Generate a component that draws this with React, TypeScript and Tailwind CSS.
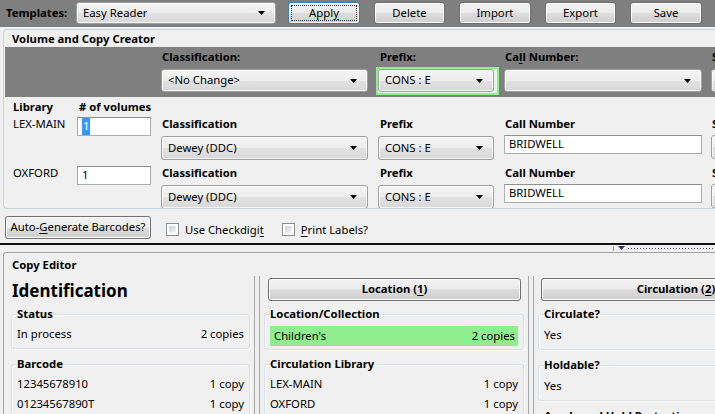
import React from "react";

const Arrow = () => (
  <svg width="7" height="4" viewBox="0 0 7 4" className="shrink-0">
    <path d="M0 0H7L3.5 4Z" fill="#000" />
  </svg>
);

function Combo({ text, className = "" }: { text: string; className?: string }) {
  return (
    <div
      className={`flex items-center justify-between rounded-[3px] border border-[#a0a0a0] bg-[linear-gradient(#f4f4f4,#ededed_50%,#e2e2e2_50%,#d8d8d8)] pl-[6px] pr-[10px] shadow-[inset_0_0_0_1px_rgba(255,255,255,0.75)] ${className}`}
    >
      <span className="truncate">{text}</span>
      <Arrow />
    </div>
  );
}

function Btn({ children, className = "" }: { children: React.ReactNode; className?: string }) {
  return (
    <div
      className={`flex items-center justify-center rounded-[3px] border border-[#707070] bg-[linear-gradient(#f2f2f2,#ebebeb_50%,#dddddd_50%,#cfcfcf)] shadow-[inset_0_0_0_1px_#fcfcfc] ${className}`}
    >
      {children}
    </div>
  );
}

function TextBox({ children, className = "" }: { children?: React.ReactNode; className?: string }) {
  return (
    <div
      className={`flex items-center border border-[#abadb3] border-t-[#8e8f8f] bg-white pl-[4px] ${className}`}
    >
      {children}
    </div>
  );
}

function Group({
  title,
  children,
  className = "",
}: {
  title: string;
  children?: React.ReactNode;
  className?: string;
}) {
  return (
    <fieldset
      className={`rounded-[3px] border border-[#d5dfe5] px-[5px] shadow-[inset_1px_1px_0_#fff,1px_1px_0_#fff] ${className}`}
    >
      <legend className="font-bold leading-[16px]">{title}</legend>
      {children}
    </fieldset>
  );
}

function Row({ left, right, className = "" }: { left: string; right?: string; className?: string }) {
  return (
    <div className={`flex h-[20px] items-center justify-between ${className}`}>
      <span>{left}</span>
      {right && <span>{right}</span>}
    </div>
  );
}

function CheckBox() {
  return (
    <div className="h-[13px] w-[13px] border border-[#8e8f8f] bg-white p-[2px]">
      <div className="h-full w-full bg-linear-to-br from-[#cbcfd5] to-[#f6f6f6]" />
    </div>
  );
}

function RightCols({ header }: { header: boolean }) {
  const suffix = header ? "Suffix:" : "Suffix";
  return (
    <div className="flex">
      <div className="flex w-[207px] shrink-0 flex-col">
        <div className="h-[17px] pl-[1px] font-bold leading-[17px]">
          {header ? "Classification:" : "Classification"}
        </div>
        <Combo
          text={header ? "<No Change>" : "Dewey (DDC)"}
          className={header ? "mt-[4px] h-[23px]" : "mt-[4px] h-[24px]"}
        />
      </div>
      <div className="ml-[10px] flex w-[116px] shrink-0 flex-col">
        <div className="h-[17px] pl-[2px] font-bold leading-[17px]">{header ? "Prefix:" : "Prefix"}</div>
        {header ? (
          <div className="-ml-[2px] mt-[2px] h-[28px] w-[123px] border-2 border-[#90ee90] bg-[#e6f5e6] pr-[3px]">
            <Combo text="CONS : E" className="h-[23px] w-[116px]" />
          </div>
        ) : (
          <Combo text="CONS : E" className="mt-[4px] h-[24px]" />
        )}
      </div>
      <div className="ml-[10px] flex w-[198px] shrink-0 flex-col">
        <div className="h-[17px] pl-[1px] font-bold leading-[17px]">
          {header ? (
            <>
              Ca<u className="underline-offset-2">l</u>l Number:
            </>
          ) : (
            "Call Number"
          )}
        </div>
        {header ? (
          <Combo text="" className="mt-[4px] h-[23px]" />
        ) : (
          <TextBox className="mt-[3px] h-[19px]">BRIDWELL</TextBox>
        )}
      </div>
      <div className="ml-[9px] flex w-[120px] shrink-0 flex-col">
        <div className="h-[17px] pl-[1px] font-bold leading-[17px]">{suffix}</div>
        <Combo text="" className={header ? "mt-[4px] h-[23px]" : "mt-[3px] h-[24px]"} />
      </div>
    </div>
  );
}

export default function App() {
  return (
    <div className="flex h-[414px] w-[715px] flex-col overflow-hidden bg-[#f0f0f0] font-['Noto_Sans',sans-serif] text-[11.3px] text-black">
      {/* Toolbar */}
      <div className="flex h-[27px] shrink-0 items-start bg-[#7f7f7f] pt-[2px]">
        <div className="ml-[6px] w-[70px] font-bold leading-[22px]">Templates:</div>
        <Combo text="Easy Reader" className="h-[22px] w-[200px]" />
        <div className="ml-[12px] h-[22px] w-[72px] rounded-[3px] border border-[#3c7fb1] bg-[linear-gradient(#f2f2f2,#ebebeb_50%,#dddddd_50%,#cfcfcf)] p-[2px] shadow-[inset_0_0_0_1px_#fcfcfc]">
          <div className="flex h-full w-full items-center justify-center border border-dotted border-[#3a3a3a]">
            Appl<u className="underline-offset-2">y</u>
          </div>
        </div>
        <Btn className="ml-[14px] h-[22px] w-[71px]">Delete</Btn>
        <Btn className="ml-[14px] h-[22px] w-[72px]">Import</Btn>
        <Btn className="ml-[14px] h-[22px] w-[71px]">Export</Btn>
        <Btn className="ml-[14px] h-[22px] w-[72px]">Save</Btn>
      </div>

      {/* Volume and Copy Creator */}
      <div className="ml-[3px] mt-[2px] flex h-[180px] shrink-0 flex-col overflow-hidden rounded-l-[4px] border border-r-0 border-[#c9d3da]">
        <div className="h-[17px] shrink-0 pl-[8px] font-bold leading-[17px]">Volume and Copy Creator</div>
        <div className="ml-[1px] flex h-[50px] shrink-0 bg-[#7f7f7f] pt-[1px]">
          <div className="w-[156px] shrink-0" />
          <RightCols header />
        </div>
        <div className="flex flex-col overflow-hidden pt-[1px]">
          <div className="flex h-[17px] shrink-0 font-bold leading-[17px]">
            <div className="ml-[9px] w-[66px]">Library</div>
            <div># of volumes</div>
          </div>
          {[
            { lib: "LEX-MAIN", sel: true },
            { lib: "OXFORD", sel: false },
          ].map((r) => (
            <div key={r.lib} className="mb-[4px] flex shrink-0">
              <div className="ml-[9px] w-[64px] shrink-0 leading-[17px]">{r.lib}</div>
              <TextBox className="mt-[2px] h-[19px] w-[74px] shrink-0">
                {r.sel ? <span className="bg-[#3399ff] px-px text-white">1</span> : <span>1</span>}
              </TextBox>
              <div className="ml-[10px]">
                <RightCols header={false} />
              </div>
            </div>
          ))}
        </div>
      </div>

      {/* Buttons row */}
      <div className="flex h-[34px] shrink-0 items-start pt-[7px]">
        <Btn className="ml-[5px] h-[23px] w-[146px]">
          <span>
            Auto-<u className="underline-offset-2">G</u>enerate Barcodes?
          </span>
        </Btn>
        <div className="ml-[15px] mt-[7px] flex items-center">
          <CheckBox />
          <span className="ml-[6px] leading-[13px]">
            Use Checkdigi<u className="underline-offset-2">t</u>
          </span>
        </div>
        <div className="ml-[18px] mt-[7px] flex items-center">
          <CheckBox />
          <span className="ml-[6px] leading-[13px]">
            <u className="underline-offset-2">P</u>rint Labels?
          </span>
        </div>
      </div>

      <div className="h-[2px] shrink-0 bg-[#111]" />

      {/* Splitter */}
      <div className="flex h-[7px] shrink-0 items-start">
        <div className="ml-[613px] mt-[1px] h-[5px] w-px bg-[#a0a0a0]" />
        <svg width="7" height="4" viewBox="0 0 7 4" className="ml-[4px] mt-[1px]">
          <path d="M0 0H7L3.5 4Z" fill="#2e3a5c" />
        </svg>
        <div className="ml-[3px] mt-[3px] h-px flex-1 bg-[repeating-linear-gradient(90deg,#4a4a6a_0,#4a4a6a_1px,transparent_1px,transparent_3px)]" />
      </div>

      {/* Copy Editor */}
      <div className="ml-[3px] flex flex-1 flex-col rounded-tl-[4px] border-l border-t border-[#a0a0a0]">
        <div className="mt-[4px] h-[16px] shrink-0 pl-[8px] font-bold leading-[16px]">Copy Editor</div>
        <div className="mt-[3px] flex flex-1">
          {/* Left column */}
          <div className="ml-[7px] flex w-[239px] shrink-0 flex-col">
            <div className="h-[30px] pl-[1px] text-[17px] font-bold leading-[30px]">Identification</div>
            <Group title="Status" className="pb-[4px]">
              <Row left="In process" right="2 copies" className="mt-[2px]" />
            </Group>
            <Group title="Barcode" className="mt-[7px] pb-[4px]">
              <Row left="12345678910" right="1 copy" className="mt-[2px]" />
              <Row left="01234567890T" right="1 copy" />
            </Group>
          </div>
          <div className="ml-[4px] w-[6px] shrink-0 border-x border-[#a8a8a8]" />
          {/* Middle column */}
          <div className="ml-[4px] flex w-[260px] shrink-0 flex-col">
            <Btn className="ml-[4px] mt-[2px] h-[23px] w-[253px] shrink-0 font-bold">
              <span>
                Location (<u className="underline-offset-2">1</u>)
              </span>
            </Btn>
            <Group title="Location/Collection" className="mt-[5px] px-[3px] pb-[3px]">
              <div className="mt-[4px] flex h-[20px] items-center justify-between bg-[#90ee90] pl-[4px] pr-[3px]">
                <span>Children's</span>
                <span>2 copies</span>
              </div>
            </Group>
            <Group title="Circulation Library" className="mt-[6px] pb-[4px]">
              <Row left="LEX-MAIN" right="1 copy" className="mt-[2px]" />
              <Row left="OXFORD" right="1 copy" />
            </Group>
          </div>
          <div className="ml-[4px] w-[6px] shrink-0 border-x border-[#a8a8a8]" />
          {/* Right column */}
          <div className="ml-[4px] flex w-[280px] shrink-0 flex-col">
            <Btn className="ml-[3px] mt-[2px] h-[23px] w-[270px] shrink-0 font-bold">
              <span>
                Circulation (<u className="underline-offset-2">2</u>)
              </span>
            </Btn>
            <Group title="Circulate?" className="mt-[5px] pb-[4px]">
              <Row left="Yes" className="mt-[3px]" />
            </Group>
            <Group title="Holdable?" className="mt-[7px] pb-[4px]">
              <Row left="Yes" className="mt-[3px]" />
            </Group>
            <Group title="Age-based Hold Protection" className="mt-[7px] pb-[4px]">
              <Row left="None" className="mt-[3px]" />
            </Group>
          </div>
        </div>
      </div>
    </div>
  );
}
